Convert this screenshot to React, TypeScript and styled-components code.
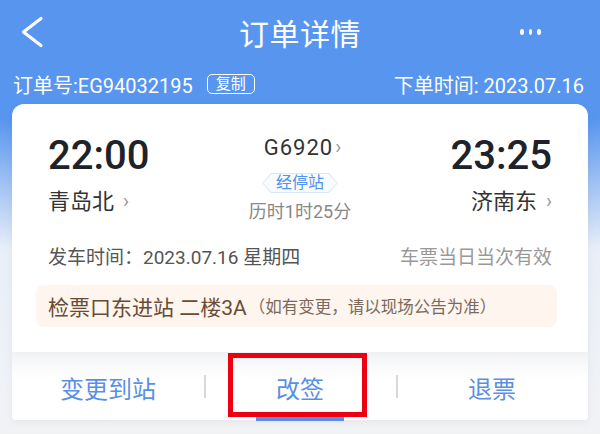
import styled, { createGlobalStyle } from "styled-components";

const GlobalStyle = createGlobalStyle`
    html, body {
        margin: 0;
        padding: 0;
    }
    body {
        font-family: Roboto, "Noto Sans CJK SC", sans-serif;
        -webkit-font-smoothing: antialiased;
    }
`;

const Page = styled.div`
    width: 600px;
    height: 434px;
    overflow: hidden;
    background: linear-gradient(180deg, #5795ef 0px, #5795ef 118px, #e9eff8 250px, #f1f2f4 100%);
`;

const Header = styled.header`
    height: 64px;
    display: grid;
    grid-template-columns: 80px 1fr 80px;
    align-items: center;
    color: #fff;
`;

const BackBtn = styled.div`
    display: flex;
    align-items: center;
    padding-left: 20px;
`;

const Title = styled.h1`
    margin: 0;
    text-align: center;
    font-size: 30px;
    font-weight: 400;
    letter-spacing: 0.5px;
`;

const More = styled.div`
    display: flex;
    gap: 5px;
    justify-content: flex-end;
    padding-right: 59px;
    & span {
        width: 6px;
        height: 6px;
        border-radius: 50%;
        background: #fff;
    }
`;

const OrderBar = styled.div`
    height: 40px;
    padding: 0 16px 0 13px;
    display: flex;
    justify-content: space-between;
    align-items: center;
    color: #fff;
    font-size: 20px;
`;

const OrderNo = styled.div`
    display: flex;
    align-items: center;
    gap: 14px;
`;

const CopyTag = styled.span`
    border: 1.5px solid #fff;
    border-radius: 5px;
    font-size: 15px;
    line-height: 18px;
    padding: 0 8px;
`;

const Card = styled.section`
    position: relative;
    margin: 0 12px;
    background: #fff;
    border-radius: 12px 12px 4px 4px;
    box-shadow: 0 2px 8px rgba(0, 0, 0, 0.05);
`;

const Body = styled.div`
    padding: 29px 36px 25px 36px;
`;

const Route = styled.div`
    display: grid;
    grid-template-columns: 1fr 1fr 1fr;
    align-items: start;
`;

const End = styled.div<{ $right?: boolean }>`
    display: flex;
    flex-direction: column;
    align-items: ${(p) => (p.$right ? "flex-end" : "flex-start")};
`;

const Time = styled.div`
    font-size: 40px;
    font-weight: 500;
    line-height: 46px;
    color: #1f2329;
`;

const Station = styled.div`
    margin-top: 8px;
    font-size: 22px;
    line-height: 30px;
    color: #333;
    display: flex;
    align-items: center;
    gap: 9px;
`;

const Chevron = styled.span`
    font-size: 20px;
    color: #999;
    line-height: 1;
    transform: translateY(-1px);
`;

const Middle = styled.div`
    display: flex;
    flex-direction: column;
    align-items: center;
    padding-top: 2px;
`;

const TrainNo = styled.div`
    font-size: 22px;
    letter-spacing: 1px;
    line-height: 26px;
    color: #333;
    display: flex;
    align-items: center;
    gap: 2px;
    padding-left: 6px;
`;

const StopTag = styled.span`
    margin-top: 12px;
    display: inline-flex;
    padding: 1px;
    background: #d9e7fb;
    clip-path: polygon(9px 0, calc(100% - 9px) 0, 100% 50%, calc(100% - 9px) 100%, 9px 100%, 0 50%);
`;

const StopInner = styled.span`
    display: block;
    padding: 0 13px;
    font-size: 16px;
    line-height: 18px;
    color: #4f92f0;
    background: #f8fbff;
    clip-path: polygon(8.5px 0, calc(100% - 8.5px) 0, 100% 50%, calc(100% - 8.5px) 100%, 8.5px 100%, 0 50%);
`;

const Duration = styled.div`
    margin-top: 7px;
    font-size: 18px;
    line-height: 24px;
    color: #888;
`;

const InfoRow = styled.div`
    margin-top: 22px;
    display: flex;
    justify-content: space-between;
    align-items: center;
    font-size: 19px;
    line-height: 24px;
`;

const Depart = styled.span`
    color: #555;
`;

const Valid = styled.span`
    color: #999;
`;

const Notice = styled.div`
    margin: 15px -5px 0 -12px;
    height: 42px;
    padding: 0 12px;
    display: flex;
    align-items: center;
    border-radius: 8px;
    background: #fdf5ee;
    color: #6a4b33;
    font-size: 21px;
`;

const NoticeHint = styled.span`
    font-size: 16.5px;
    color: #7b6a5b;
    margin-left: 2px;
`;

const Actions = styled.div`
    position: relative;
    height: 68px;
    display: grid;
    grid-template-columns: 1fr 1fr 1fr;
    align-items: center;
    background: linear-gradient(180deg, #f0f1f3 0px, #f9f9fa 12px, #fff 28px);
    border-radius: 0 0 4px 4px;
`;

const Action = styled.div<{ $divider?: boolean; $active?: boolean }>`
    position: relative;
    height: 100%;
    display: flex;
    align-items: center;
    justify-content: center;
    font-size: 24px;
    color: #5b8fe6;
    padding-top: 2px;
    box-sizing: border-box;
    ${(p) =>
        p.$divider &&
        `&::before {
            content: "";
            position: absolute;
            left: 0;
            top: 23px;
            width: 1.5px;
            height: 23px;
            background: #d8d8d8;
        }`}
    ${(p) =>
        p.$active &&
        `&::after {
            content: "";
            position: absolute;
            bottom: -1px;
            left: 50%;
            margin-left: -44px;
            width: 88px;
            height: 4px;
            background: #5b8de8;
        }`}
`;

const Highlight = styled.div`
    position: absolute;
    left: 216px;
    top: 1px;
    width: 139px;
    height: 64px;
    box-sizing: border-box;
    border: 5px solid #ec0012;
    pointer-events: none;
`;

export default function App(): JSX.Element {
    return (
        <Page>
            <GlobalStyle />
            <Header>
                <BackBtn>
                    <svg width="24" height="32" viewBox="0 0 24 32">
                        <polyline points="21,2.5 3.5,16 21,29.5" fill="none" stroke="#fff" strokeWidth="3.2" strokeLinecap="round" strokeLinejoin="round" />
                    </svg>
                </BackBtn>
                <Title>订单详情</Title>
                <More>
                    <span />
                    <span />
                    <span />
                </More>
            </Header>

            <OrderBar>
                <OrderNo>
                    <span>订单号:EG94032195</span>
                    <CopyTag>复制</CopyTag>
                </OrderNo>
                <span>下单时间: 2023.07.16</span>
            </OrderBar>

            <Card>
                <Body>
                    <Route>
                        <End>
                            <Time>22:00</Time>
                            <Station>
                                青岛北<Chevron>›</Chevron>
                            </Station>
                        </End>
                        <Middle>
                            <TrainNo>
                                G6920<Chevron>›</Chevron>
                            </TrainNo>
                            <StopTag>
                                <StopInner>经停站</StopInner>
                            </StopTag>
                            <Duration>历时1时25分</Duration>
                        </Middle>
                        <End $right>
                            <Time>23:25</Time>
                            <Station>
                                济南东<Chevron>›</Chevron>
                            </Station>
                        </End>
                    </Route>
                    <InfoRow>
                        <Depart>发车时间：2023.07.16 星期四</Depart>
                        <Valid>车票当日当次有效</Valid>
                    </InfoRow>
                    <Notice>
                        检票口东进站 二楼3A
                        <NoticeHint>（如有变更，请以现场公告为准）</NoticeHint>
                    </Notice>
                </Body>
                <Actions>
                    <Action>变更到站</Action>
                    <Action $divider $active>改签</Action>
                    <Action $divider>退票</Action>
                    <Highlight />
                </Actions>
            </Card>
        </Page>
    );
}
